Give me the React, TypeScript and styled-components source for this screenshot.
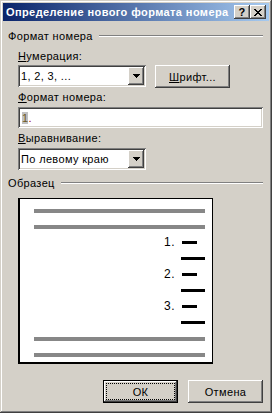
import * as React from 'react';
import styled, { createGlobalStyle } from 'styled-components';

/* ==================== [Style] ==================== */
const GlobalStyle = createGlobalStyle`
    html, body {
        margin: 0;
        padding: 0;
        background: #d4d0c8;
    }
    body {
        font-family: "Liberation Sans", Arial, sans-serif;
        font-size: 11px;
        letter-spacing: 0.35px;
        color: #000;
    }
`;

const raised = `
    box-shadow: inset -1px -1px #404040, inset 1px 1px #ffffff, inset -2px -2px #808080, inset 2px 2px #d4d0c8;
`;
const sunken = `
    box-shadow: inset 1px 1px #808080, inset -1px -1px #ffffff, inset 2px 2px #404040, inset -2px -2px #d4d0c8;
`;

const Window=styled.div`
    box-sizing: border-box;
    display: flex;
    flex-direction: column;
    width: 272px;
    height: 413px;
    padding: 3px;
    background-color: #d4d0c8;
    box-shadow: inset -1px -1px #404040, inset 1px 1px #d4d0c8, inset -2px -2px #808080, inset 2px 2px #ffffff;
`;

const TitleBar=styled.div`
    display: flex;
    align-items: center;
    height: 18px;
    padding: 0 3px;
    background: linear-gradient(to right, #0a246a, #a6caf0);
`;

const TitleText=styled.div`
    flex: 1;
    color: #ffffff;
    font-weight: bold;
    font-size: 11px;
    letter-spacing: 0.4px;
    white-space: nowrap;
`;

const CaptionBtn=styled.div`
    display: flex;
    justify-content: center;
    align-items: center;
    width: 16px;
    height: 14px;
    background-color: #d4d0c8;
    font-weight: bold;
    font-size: 11px;
    ${raised}
`;

const Content=styled.div`
    display: flex;
    flex-direction: column;
    padding: 0 6px 0 5px;
`;

const GroupHeader=styled.div<{ $top: number }>`
    display: flex;
    align-items: center;
    gap: 6px;
    height: 14px;
    margin-top: ${p => p.$top}px;
    line-height: 14px;
`;

const GroupLine=styled.div`
    flex: 1;
    border-top: 1px solid #808080;
    border-bottom: 1px solid #ffffff;
`;

const Label=styled.div<{ $top: number }>`
    margin: ${p => p.$top}px 0 0 10px;
    height: 13px;
    line-height: 13px;
    white-space: nowrap;
`;

const Row=styled.div`
    display: flex;
    align-items: flex-start;
    gap: 9px;
    margin: 2px 0 0 10px;
`;

const Combo=styled.div<{ $top?: number }>`
    box-sizing: border-box;
    display: flex;
    align-items: center;
    width: 128px;
    height: 22px;
    margin-top: ${p => p.$top ?? 0}px;
    padding: 2px;
    background-color: #ffffff;
    ${sunken}
`;

const ComboText=styled.div`
    flex: 1;
    padding-left: 1px;
    white-space: nowrap;
`;

const ComboArrow=styled.div`
    display: flex;
    justify-content: center;
    align-items: center;
    width: 16px;
    height: 18px;
    background-color: #d4d0c8;
    ${raised}
`;

const Button=styled.div<{ $default?: boolean }>`
    box-sizing: border-box;
    position: relative;
    display: flex;
    justify-content: center;
    align-items: center;
    width: 75px;
    height: 23px;
    background-color: #d4d0c8;
    border: ${p => p.$default ? '1px solid #000000' : '0'};
    ${raised}
`;

const FocusRing=styled.span`
    position: absolute;
    inset: 2px;
    border: 1px dotted #000000;
`;

const Edit=styled.div`
    box-sizing: border-box;
    display: flex;
    align-items: center;
    height: 21px;
    margin: 3px 0 0 10px;
    padding: 0 4px;
    background-color: #ffffff;
    ${sunken}
`;

const FieldCode=styled.span`
    background-color: #c0c0c0;
    color: #6e5a1e;
`;

const Dot=styled.span`
    color: #a00000;
`;

const Preview=styled.div`
    box-sizing: border-box;
    display: flex;
    flex-direction: column;
    width: 195px;
    height: 166px;
    margin: 8px 0 0 10px;
    padding: 10px 7px 0 14px;
    background-color: #ffffff;
    border: 1px solid #000000;
    border-left-width: 2px;
    border-bottom-width: 2px;
`;

const PreviewRow=styled.div`
    display: flex;
    justify-content: flex-end;
    align-items: flex-start;
    height: 16px;
    flex-shrink: 0;
`;

const Bar=styled.div<{ $w?: number; $color: string; $right?: number; $h?: number }>`
    flex: ${p => p.$w ? '0 0 auto' : '1'};
    width: ${p => p.$w ? `${p.$w}px` : 'auto'};
    height: ${p => p.$h ?? 3}px;
    margin-right: ${p => p.$right ?? 0}px;
    background-color: ${p => p.$color};
`;

const Num=styled.span`
    margin-right: 7px;
    font-size: 12px;
    letter-spacing: 0.5px;
    line-height: 3px;
`;

const Footer=styled.div`
    display: flex;
    justify-content: flex-end;
    gap: 10px;
    margin-top: 16px;
`;

/* ==================== [Parts] ==================== */
const Arrow=()=>(
    <svg width="7" height="4" viewBox="0 0 7 4" shapeRendering="crispEdges">
        <path d="M0 0h7v1H0zM1 1h5v1H1zM2 2h3v1H2zM3 3h1v1H3z" fill="#000"/>
    </svg>
);

const CloseGlyph=()=>(
    <svg width="8" height="7" viewBox="0 0 8 7" shapeRendering="crispEdges">
        <path d="M0 0h2v1H0zM6 0h2v1H6zM1 1h2v1H1zM5 1h2v1H5zM2 2h4v1H2zM3 3h2v1H3zM2 4h4v1H2zM1 5h2v1H1zM5 5h2v1H5zM0 6h2v1H0zM6 6h2v1H6z" fill="#000"/>
    </svg>
);

const NumberedRow=({ n }: { n: number })=>(
    <PreviewRow>
        <Num>{n}.</Num>
        <Bar $w={15} $color="#000" $right={8}/>
    </PreviewRow>
);

const GrayRow=()=>(
    <PreviewRow><Bar $color="#878787" $h={4}/></PreviewRow>
);

const LongRow=()=>(
    <PreviewRow><Bar $w={24} $color="#000"/></PreviewRow>
);

const App=()=>{
    return (
        <>
            <GlobalStyle/>
            <Window>
                <TitleBar>
                    <TitleText>Определение нового формата номера</TitleText>
                    <CaptionBtn>?</CaptionBtn>
                    <CaptionBtn><CloseGlyph/></CaptionBtn>
                </TitleBar>
                <Content>
                    <GroupHeader $top={8}>
                        <span>Формат номера</span>
                        <GroupLine/>
                    </GroupHeader>
                    <Label $top={7}><u>Н</u>умерация:</Label>
                    <Row>
                        <Combo>
                            <ComboText>1, 2, 3, ...</ComboText>
                            <ComboArrow><Arrow/></ComboArrow>
                        </Combo>
                        <Button><span><u>Ш</u>рифт...</span></Button>
                    </Row>
                    <Label $top={3}><u>Ф</u>ормат номера:</Label>
                    <Edit>
                        <FieldCode>1</FieldCode><Dot>.</Dot>
                    </Edit>
                    <Label $top={4}><u>В</u>ыравнивание:</Label>
                    <Row>
                        <Combo $top={1}>
                            <ComboText>По левому краю</ComboText>
                            <ComboArrow><Arrow/></ComboArrow>
                        </Combo>
                    </Row>
                    <GroupHeader $top={6}>
                        <span>Образец</span>
                        <GroupLine/>
                    </GroupHeader>
                    <Preview>
                        <GrayRow/>
                        <GrayRow/>
                        <NumberedRow n={1}/>
                        <LongRow/>
                        <NumberedRow n={2}/>
                        <LongRow/>
                        <NumberedRow n={3}/>
                        <LongRow/>
                        <GrayRow/>
                        <GrayRow/>
                    </Preview>
                    <Footer>
                        <Button $default><FocusRing/>ОК</Button>
                        <Button>Отмена</Button>
                    </Footer>
                </Content>
            </Window>
        </>
    );
}

export default App;
